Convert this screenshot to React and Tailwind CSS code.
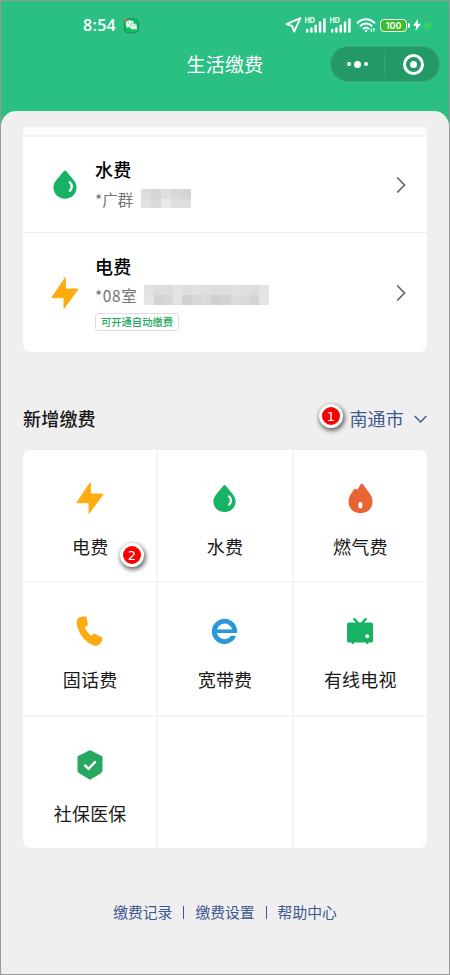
import React from 'react';

function Drop({ className }) {
  return (
    <svg className={className} viewBox="0 0 24 29" fill="none">
      <path d="M12 .4c.6 0 1 .4 1.500 1L20.600 10c1.900 2.400 3 4.800 3 7.300C23.600 24 18.500 28.700 12 28.700S.4 24 .4 17.300c0-2.500 1.100-4.900 3-7.300l7.100-8.600c.5-.6.900-1 1.500-1Z" fill="#16b364" />
      <path d="M16.600 12.200c2.800 2.500 2.800 6.200.3 8.700" stroke="#fff" strokeWidth="2.300" strokeLinecap="round" />
    </svg>
  );
}

function Bolt({ className }) {
  return (
    <svg className={className} viewBox="0 0 28 32">
      <path d="M14.300.7V12.100H27.200L13 31.300V20.700H.8Z" fill="#fdab10" stroke="#fdab10" strokeWidth="1" strokeLinejoin="round" />
    </svg>
  );
}

function Flame() {
  return (
    <svg className="h-[31px] w-[25px]" viewBox="0 0 25 31">
      <path d="M13.700.4C13.300.4 13 .8 12.700 1.200L9.600 6.500 7 5.700C6.500 5.700 6.200 6.100 5.900 6.500L3.500 10C1.500 12.800.5 15.500.5 18.500c0 7 5 11.700 12 11.700s12-4.700 12-11.700c0-3.200-1.100-5.800-2.800-8L14.900 1.300C14.500.8 14.100.4 13.700.4Z" fill="#e96433" />
      <ellipse cx="12.400" cy="22.200" rx="2" ry="3.300" fill="#fff" />
    </svg>
  );
}

function Phone() {
  return (
    <svg className="h-[31px] w-[28px]" viewBox="0 0 28 31">
      <path d="M3 1.600C5 .6 7.500.3 9.300.4c.8 0 1.200.4 1.300 1.100l1.200 6.700c.1.700-.1 1.200-.7 1.500l-2.400 1.600c1.300 3.600 3.700 6.300 6.600 8.500l2.100-1.700c.6-.5 1.200-.5 1.800-.2l6.400 3.400c.8.400 1.100 1 .9 1.800-.5 2.400-2 4.800-4 6.200-1.500.8-3.400.7-5.200 0C8.700 25.700 3.300 18.700 1 9.300.3 6.200.8 3 3 1.600Z" fill="#fdab10" />
    </svg>
  );
}

function Broadband() {
  return (
    <svg className="h-[27px] w-[27px]" viewBox="0 0 27 27" fill="none">
      <path d="M23.700 13.500A10.200 10.200 0 1 0 22.800 17.600" stroke="#2798d8" strokeWidth="4.800" />
      <path d="M5 13.200h21.100" stroke="#2798d8" strokeWidth="3.600" />
      <path d="M20 16.400h7" stroke="#fff" strokeWidth="2.600" />
    </svg>
  );
}

function Television() {
  return (
    <svg className="h-[27px] w-[26px]" viewBox="0 0 26 27">
      <path d="m7.300 1.200 4 4.300M18.700 1.200l-4 4.300" stroke="#16b364" strokeWidth="2.500" strokeLinecap="round" />
      <rect y="4.600" width="26" height="19.800" rx="1.600" fill="#16b364" />
      <path d="M5 24h1.500v1.500H5zm14.500 0H21v1.500h-1.500z" fill="#16b364" stroke="#16b364" />
      <circle cx="20.300" cy="18.200" r="2" fill="#fff" />
    </svg>
  );
}

function Shield() {
  return (
    <svg className="h-[30px] w-[26px]" viewBox="0 0 26 30" fill="none">
      <path d="M12.100.5a2 2 0 0 1 1.800 0l10.500 5.200c.8.400 1.100.9 1.100 1.700v12c0 2-.7 3.300-2.400 4.300l-9.200 5.600a2 2 0 0 1-1.800 0l-9.200-5.600C1.200 22.700.5 21.400.5 19.400v-12c0-.8.300-1.300 1.100-1.700L12.100.5Z" fill="#26a860" />
      <path d="m7.500 14.800 4 4 7.300-7.500" stroke="#fff" strokeWidth="2.400" />
    </svg>
  );
}

function Signal() {
  return (
    <svg className="h-4 w-[22px]" viewBox="0 0 22 16">
      <text x="-.5" y="6" fontSize="7" fontWeight="700" fill="#fff" fontFamily="Inter, sans-serif">HD</text>
      <path d="M2.200 13v1.500M6.400 11.500v3M10.700 8.800v5.700M15 5.500v9M19.400 2.500v12" stroke="#fff" strokeWidth="2.500" strokeLinecap="round" />
    </svg>
  );
}

function StatusBar() {
  return (
    <div className="flex h-[48px] items-center pl-[82px] pr-[18px] text-white">
      <span className="w-[36px] font-['Open_Sans','Noto_Sans',sans-serif] text-[16px] font-semibold leading-none tracking-[0.300px]">8:54</span>
      <svg className="ml-[4px] h-[17px] w-[17px]" viewBox="0 0 17 17">
        <rect x="1.300" y="1.800" width="14" height="14" rx="4" fill="#08c45c" stroke="#32714e" strokeWidth=".8" />
        <path d="m1 4 2-3 2 1-3 3Z" fill="#d46b4c" />
        <ellipse cx="6.800" cy="6.900" rx="4" ry="3.400" fill="#fff" />
        <ellipse cx="10.400" cy="9.600" rx="3.700" ry="3" fill="#fff" stroke="#08c45c" strokeWidth=".5" />
        <path d="M5.400 6h.1M8.200 6h.1M9.200 9h.1M11.600 9h.1" stroke="#08a550" strokeLinecap="round" />
        <path d="m4 9-.3 2 2-1ZM12 12l1.800 1-.3-2Z" fill="#fff" />
      </svg>
      <svg className="ml-auto h-4 w-[17px]" viewBox="0 0 17 16">
        <path d="M15.300 1.200 1.500 7.200 7.300 9.200 9.200 14.700Z" fill="none" stroke="#fff" strokeWidth="1.900" strokeLinejoin="round" />
      </svg>
      <div className="ml-[3px] flex gap-[3px]"><Signal /><Signal /></div>
      <svg className="ml-[4px] h-4 w-[21px]" viewBox="0 0 21 16" fill="none" stroke="#fff" strokeWidth="2.100">
        <path d="M1 6.200C6.200.9 13.800.9 19 6.200M3.900 9.200c3.600-3.700 8.600-3.700 12.200 0M6.900 12.100c2-2 4.300-2 6.200 0" />
        <circle cx="10" cy="13.900" r="1.200" fill="#fff" stroke="none" />
        <path d="M15.300 11.500v3.500M17.800 11v3.500" strokeWidth="1.300" />
      </svg>
      <div className="ml-[3px] flex h-[13px] w-[27px] items-center justify-center rounded-[4px] border border-white bg-[#39bd28] font-['Inter',sans-serif] text-[9px] font-semibold leading-none">100</div>
      <div className="ml-px h-[5px] w-[2px] rounded-r bg-white" />
      <svg className="ml-[3px] h-3 w-2" viewBox="0 0 8 12"><path d="M5 0 0 6.700h3.200L2.400 12 8 4.800H4.700Z" fill="#fff" /></svg>
      <div className="ml-[3px] h-[7px] w-[7px] rounded-full bg-[#35d461]" />
    </div>
  );
}

function Mosaic({ colors, className }) {
  return (
    <div className={`grid auto-rows-[10px] overflow-hidden ${className}`}>
      {colors.map((c, i) => <div key={i} style={{ backgroundColor: c }} />)}
    </div>
  );
}

function Marker({ n, className }) {
  return (
    <div className={`absolute flex h-6 w-6 items-center justify-center rounded-full border-[3px] border-white bg-[#fb0000] font-['DejaVu_Sans',sans-serif] text-[13px] leading-none text-white shadow-[1px_2px_4px_1px_rgba(0,0,0,0.55)] ${className}`}>
      {n}
    </div>
  );
}

function Arrow() {
  return (
    <svg className="ml-auto h-[18px] w-3" viewBox="0 0 12 18" fill="none">
      <path d="m2.200 1.500 7.300 7.500-7.300 7.500" stroke="#666" strokeWidth="1.700" />
    </svg>
  );
}

const services = [
  { name: '电费', icon: <Bolt className="h-[32px] w-[28px]" />, marker: 2 },
  { name: '水费', icon: <Drop className="h-[29px] w-[23px]" /> },
  { name: '燃气费', icon: <Flame /> },
  { name: '固话费', icon: <Phone /> },
  { name: '宽带费', icon: <Broadband /> },
  { name: '有线电视', icon: <Television /> },
  { name: '社保医保', icon: <Shield /> },
  {},
  {},
];

const waterColors = ['#dcdcdc', '#d5d5d5', '#dfdfdf', '#d8d8d8', '#d5d5d5', '#e2e2e2', '#d9d9d9', '#e9e9e9', '#dedede', '#dedede'];
const powerColors = ['#e2e2e2', '#dddddd', '#dddddd', '#e4e4e4', '#dfdfdf', '#e1e1e1', '#dfdfdf', '#dcdcdc', '#dddddd', '#e1e1e1', '#dfdfdf', '#dcdcdc', '#e3e3e3', '#e4e4e4', '#d2d2d2', '#d6d6d6', '#e3e3e3', '#d1d1d1', '#d7d7d7', '#d9d9d9', '#cecece', '#d2d2d2', '#dcdcdc', '#d9d9d9', '#d4d4d4', '#e4e4e4'];

export default function App() {
  return (
    <div className="flex h-[975px] w-[450px] flex-col overflow-hidden border border-[#999] bg-[#2abf83] font-['Noto_Sans_CJK_SC',sans-serif] text-[#191919]">
      <header className="h-[110px] shrink-0">
        <StatusBar />
        <div className="-mt-[3px] grid h-9 grid-cols-[1fr_auto_1fr] items-center pr-[9px]">
          <h1 className="col-start-2 pl-[9px] text-[19px] leading-9 tracking-[0.300px] text-white">生活缴费</h1>
          <div className="flex h-9 w-[110px] items-center justify-self-end rounded-full border border-[#3ba77a] bg-[#239968]">
            <div className="flex w-[53px] items-center justify-center gap-[3px]">
              <i className="h-1 w-1 rounded-full bg-white" />
              <i className="h-[7px] w-[7px] rounded-full bg-white" />
              <i className="h-1 w-1 rounded-full bg-white" />
            </div>
            <div className="h-[22px] w-px bg-[#35a678]" />
            <div className="ml-[18px] flex h-[21px] w-[21px] items-center justify-center rounded-full border-[3px] border-white">
              <i className="h-[7px] w-[7px] rounded-full bg-white" />
            </div>
          </div>
        </div>
      </header>

      <main className="flex-1 rounded-t-[15px] bg-[#efefef] px-[22px] pt-4">
        <section className="h-[225px] overflow-hidden rounded-b-lg bg-white">
          <div className="h-[10px] border-b-2 border-[#f3f3f3] bg-[#fcfcfc]" />
          <div className="flex h-[95px] items-center pl-[30px] pr-[20px]">
            <Drop className="h-[29px] w-6" />
            <div className="ml-[18px] pb-[2px]">
              <div className="text-[18px] font-medium leading-7 tracking-[0.200px] text-black">水费</div>
              <div className="mt-[2px] flex items-center text-[15.500px] leading-7 text-[#737373]">
                <span className="w-[46px] whitespace-nowrap">*广群</span>
                <Mosaic className="h-[19px] w-[50px] grid-cols-5" colors={waterColors} />
              </div>
            </div>
            <Arrow />
          </div>
          <div className="flex h-[120px] items-center border-t border-[#ededf0] pl-[30px] pr-[20px]">
            <Bolt className="-ml-[2px] h-[32px] w-[28px]" />
            <div className="ml-[16px] pb-[2px]">
              <div className="text-[18px] font-medium leading-7 tracking-[0.200px] text-black">电费</div>
              <div className="mt-px flex items-center text-[15.500px] leading-7 text-[#737373]">
                <span className="w-[49px] whitespace-nowrap tracking-[0.600px]">*08室</span>
                <Mosaic className="h-[20px] w-[125px] grid-cols-[repeat(13,minmax(0,1fr))]" colors={powerColors} />
              </div>
              <div className="mt-[4px] flex h-[18px] w-[84px] items-center justify-center whitespace-nowrap rounded-[3px] border border-[#dedede] text-[10.300px] font-medium leading-none text-[#26a860]">可开通自动缴费</div>
            </div>
            <Arrow />
          </div>
        </section>

        <div className="relative flex h-[98px] items-center pt-[33px] text-[18px] leading-7 tracking-[0.200px]">
          <h2 className="font-medium">新增缴费</h2>
          <span className="ml-auto text-[#3f5890]">南通市</span>
          <svg className="ml-[10px] mt-[3px] h-[9px] w-[13px]" viewBox="0 0 13 9" fill="none"><path d="m.7 1 5.800 6 5.800-6" stroke="#3f5890" strokeWidth="1.500" /></svg>
          <Marker n={1} className="left-[296px] top-[52px]" />
        </div>

        <section className="grid h-[398px] grid-cols-3 grid-rows-3 gap-x-[2px] gap-y-[2px] overflow-hidden rounded-lg bg-[#f5f5f8]">
          {services.map((service, i) => (
            <div key={i} className="relative flex flex-col items-center bg-white pt-[32px]">
              {service.name && <>
                <div className="flex h-8 items-center justify-center">{service.icon}</div>
                <div className={`mt-[18px] text-[18px] leading-7 tracking-[0.200px] ${i % 3 === 0 ? 'pl-px' : ''}`}>{service.name}</div>
              </>}
              {service.marker && <Marker n={service.marker} className="left-[97px] top-[93px]" />}
            </div>
          ))}
        </section>

        <footer className="mt-[52px] flex items-center justify-center text-[14.800px] leading-6 text-[#3f5890]">
          <span>缴费记录</span>
          <i className="mx-[11px] h-[13px] w-px bg-[#3f5890]" />
          <span>缴费设置</span>
          <i className="mx-[11px] h-[13px] w-px bg-[#3f5890]" />
          <span>帮助中心</span>
        </footer>
      </main>
    </div>
  );
}
